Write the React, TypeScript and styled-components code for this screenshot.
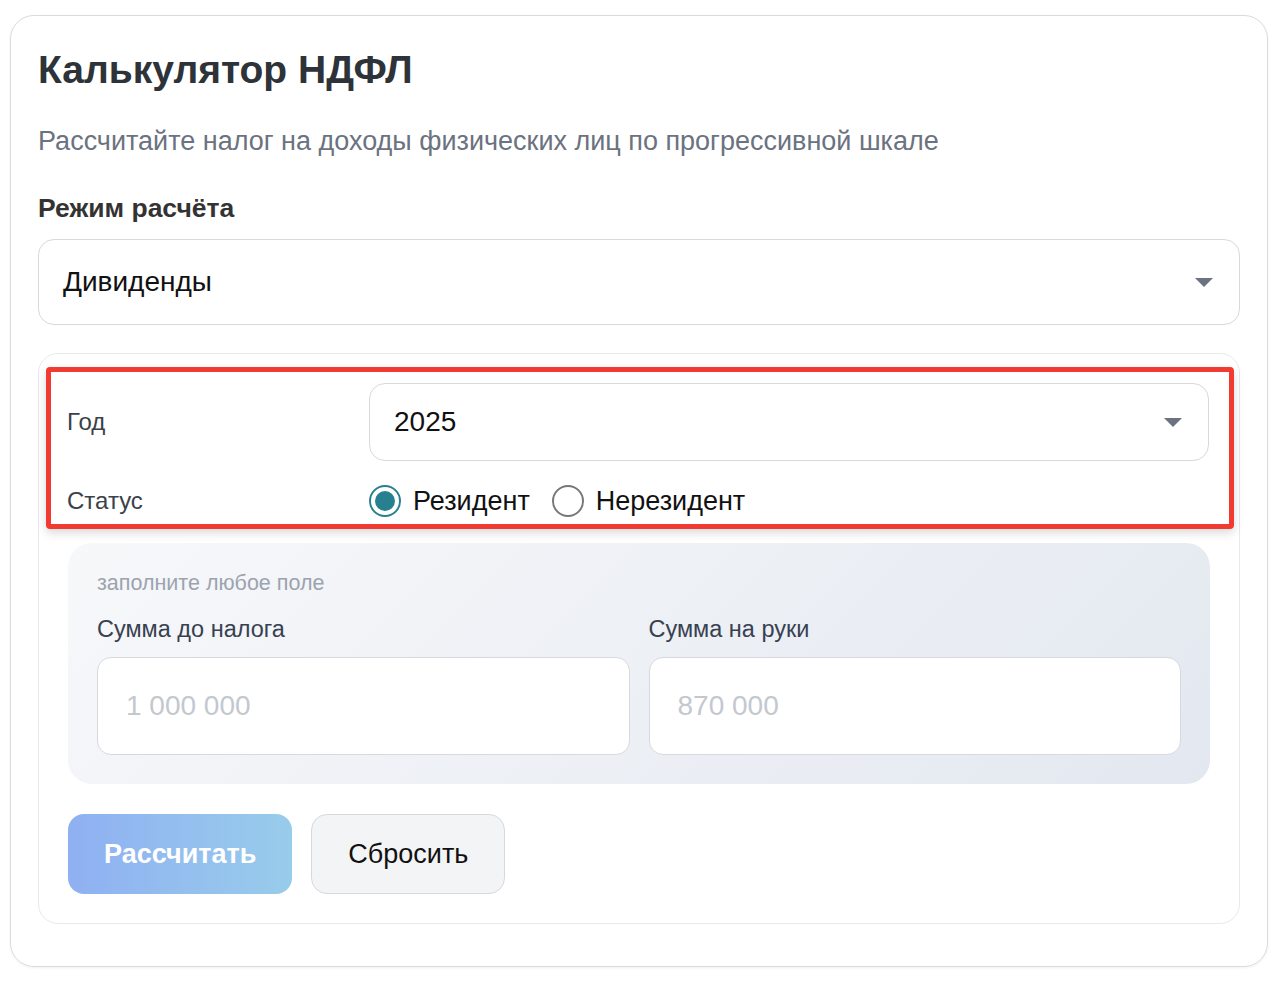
import React, { useState } from 'react';
import styled, { createGlobalStyle } from 'styled-components';

const Global = createGlobalStyle`
  body { margin: 0; background: #fff; font-family: "Liberation Sans", Arial, sans-serif; }
  * { box-sizing: border-box; }
`;

const Page = styled.div`
  padding: 15px 11px 10px 10px;
`;

const Card = styled.div`
  border: 1px solid #d9dbe0;
  border-radius: 24px;
  padding: 28px 27px 42px;
  box-shadow: 0 1px 3px rgba(0, 0, 0, 0.06);
`;

const Title = styled.h1`
  margin: 0;
  font-size: 39px;
  font-weight: 700;
  color: #2d3338;
  line-height: 52px;
`;

const Subtitle = styled.p`
  margin: 30px 0 0;
  font-size: 27px;
  color: #6b7280;
`;

const SectionLabel = styled.div`
  margin-top: 36px;
  font-size: 26.5px;
  font-weight: 700;
  color: #333;
`;

const SelectBox = styled.div<{ $height: number }>`
  position: relative;
  display: flex;
  align-items: center;
  height: ${({ $height }) => $height}px;
  padding: 0 24px;
  border: 1px solid #d6d9de;
  border-radius: 16px;
  background: #fff;
  font-size: 28px;
  color: #111;
  flex: 1;
`;

const Caret = styled.span`
  position: absolute;
  right: 26px;
  top: 50%;
  margin-top: -4px;
  border-left: 9px solid transparent;
  border-right: 9px solid transparent;
  border-top: 9px solid #6b7280;
`;

const Panel = styled.div`
  margin-top: 28px;
  border: 1px solid #e7e9ec;
  border-radius: 20px;
  padding: 13px 29px 29px;
`;

const Highlight = styled.div`
  margin: 0 -24px 0 -22px;
  padding: 11px 20px 7px 16px;
  border: 5px solid #f03a32;
  border-radius: 4px;
  box-shadow: 0 4px 10px rgba(0, 0, 0, 0.15);
`;

const Row = styled.div<{ $gap?: number }>`
  display: flex;
  align-items: center;
  margin-top: ${({ $gap }) => $gap ?? 0}px;
`;

const RowLabel = styled.div`
  width: 302px;
  font-size: 24px;
  color: #3b4148;
`;

const Radio = styled.label`
  display: flex;
  align-items: center;
  gap: 12px;
  margin-right: 22px;
  font-size: 27px;
  color: #111;
  cursor: pointer;
`;

const Dot = styled.span<{ $on: boolean }>`
  width: 32px;
  height: 32px;
  border-radius: 50%;
  border: 2px solid ${({ $on }) => ($on ? '#26808f' : '#777')};
  display: flex;
  align-items: center;
  justify-content: center;
  &::after {
    content: '';
    width: 20px;
    height: 20px;
    border-radius: 50%;
    background: ${({ $on }) => ($on ? '#26808f' : 'transparent')};
  }
`;

const Fill = styled.div`
  margin-top: 14px;
  border-radius: 24px;
  padding: 28px 29px 29px;
  background: linear-gradient(135deg, #f7f8fa 0%, #e3e8f0 100%);
`;

const Hint = styled.div`
  font-size: 21.5px;
  color: #9ca3af;
`;

const Fields = styled.div`
  display: grid;
  grid-template-columns: 1fr 1fr;
  gap: 19px;
  margin-top: 20px;
`;

const FieldLabel = styled.div`
  font-size: 23.5px;
  color: #374151;
  margin-bottom: 14px;
`;

const Input = styled.input`
  width: 100%;
  height: 98px;
  border: 1px solid #d6d9de;
  border-radius: 14px;
  padding: 0 28px;
  font-size: 28px;
  font-family: inherit;
  background: #fff;
  &::placeholder { color: #c3c8cf; }
`;

const Buttons = styled.div`
  display: flex;
  gap: 19px;
  margin-top: 30px;
`;

const Button = styled.button<{ $primary?: boolean }>`
  height: 80px;
  padding: 0 36px;
  border-radius: 16px;
  font-family: inherit;
  font-size: 27px;
  border: ${({ $primary }) => ($primary ? 'none' : '1px solid #d6d9de')};
  background: ${({ $primary }) =>
    $primary ? 'linear-gradient(90deg, #8fb0f2 0%, #98cceb 100%)' : '#f3f4f6'};
  color: ${({ $primary }) => ($primary ? '#fff' : '#111')};
  font-weight: ${({ $primary }) => ($primary ? 700 : 400)};
`;

export default function App() {
  const [resident, setResident] = useState(true);
  return (
    <Page>
      <Global />
      <Card>
        <Title>Калькулятор НДФЛ</Title>
        <Subtitle>Рассчитайте налог на доходы физических лиц по прогрессивной шкале</Subtitle>
        <SectionLabel>Режим расчёта</SectionLabel>
        <Row $gap={15}>
          <SelectBox $height={86}>Дивиденды<Caret /></SelectBox>
        </Row>
        <Panel>
          <Highlight>
            <Row>
              <RowLabel>Год</RowLabel>
              <SelectBox $height={78}>2025<Caret /></SelectBox>
            </Row>
            <Row $gap={24}>
              <RowLabel>Статус</RowLabel>
              <Radio onClick={() => setResident(true)}><Dot $on={resident} />Резидент</Radio>
              <Radio onClick={() => setResident(false)}><Dot $on={!resident} />Нерезидент</Radio>
            </Row>
          </Highlight>
          <Fill>
            <Hint>заполните любое поле</Hint>
            <Fields>
              <div>
                <FieldLabel>Сумма до налога</FieldLabel>
                <Input placeholder="1 000 000" />
              </div>
              <div>
                <FieldLabel>Сумма на руки</FieldLabel>
                <Input placeholder="870 000" />
              </div>
            </Fields>
          </Fill>
          <Buttons>
            <Button $primary>Рассчитать</Button>
            <Button>Сбросить</Button>
          </Buttons>
        </Panel>
      </Card>
    </Page>
  );
}
